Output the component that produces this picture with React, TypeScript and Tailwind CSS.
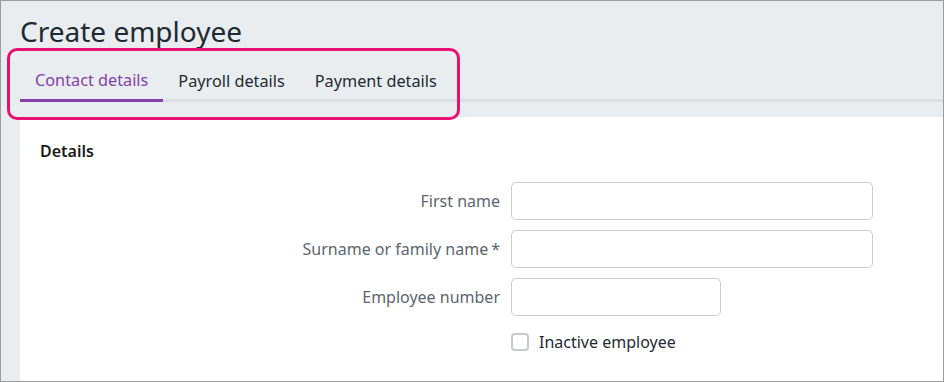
import React from "react";

export default function App() {
  const font = { fontFamily: '"Noto Sans", "Open Sans", Arial, sans-serif' };
  return (
    <div
      className="relative w-[944px] h-[382px] border border-[#9c9c9c] bg-[#e9edf0] overflow-hidden flex flex-col"
      style={font}
    >
      <h1 className="pl-[19px] pt-[10px] h-[56px] text-[28px] leading-[40px] text-[#1e2a33] font-normal">
        Create employee
      </h1>
      <div className="ml-[19px] flex border-b-[3px] border-[#dadee2] h-[45px]">
        <div className="px-[15px] pt-[4px] h-[45px] -mb-[3px] border-b-[3px] border-[#8241aa] flex items-center text-[16.25px] text-[#8241aa]">
          Contact details
        </div>
        <div className="px-[15px] pt-[4px] h-[45px] flex items-center text-[16.25px] text-[#1e2a33]">
          Payroll details
        </div>
        <div className="px-[15px] pt-[4px] h-[45px] flex items-center text-[16.25px] text-[#1e2a33]">
          Payment details
        </div>
      </div>
      <div className="ml-[19px] mt-[15px] flex-1 bg-white pl-[20px] pt-[20px]">
        <h2 className="text-[16px] font-semibold text-[#1a1a1a] leading-[28px]">Details</h2>
        <div className="mt-[17px] grid grid-cols-[460px_auto] gap-x-[11px] gap-y-[10px] items-center">
          <label className="text-right text-[16px] text-[#5b6670]">First name</label>
          <div className="w-[362px] h-[38px] rounded-[5px] border border-[#c9ccd1] bg-white" />
          <label className="text-right text-[16px] text-[#5b6670]">
            Surname or family name<span className="ml-[3px]">*</span>
          </label>
          <div className="w-[362px] h-[38px] rounded-[5px] border border-[#c9ccd1] bg-white" />
          <label className="text-right text-[16px] text-[#5b6670]">Employee number</label>
          <div className="w-[210px] h-[38px] rounded-[5px] border border-[#c9ccd1] bg-white" />
          <div />
          <div className="flex items-center gap-[10px] mt-[4px]">
            <span className="w-[18px] h-[18px] rounded-[4px] border-2 border-[#c6c9ce] bg-white" />
            <span className="text-[16px] text-[#1e2a33]">Inactive employee</span>
          </div>
        </div>
      </div>
      <div className="absolute left-[6px] top-[47px] w-[453px] h-[72px] rounded-[10px] border-[3px] border-[#ea0f72]" />
    </div>
  );
}
